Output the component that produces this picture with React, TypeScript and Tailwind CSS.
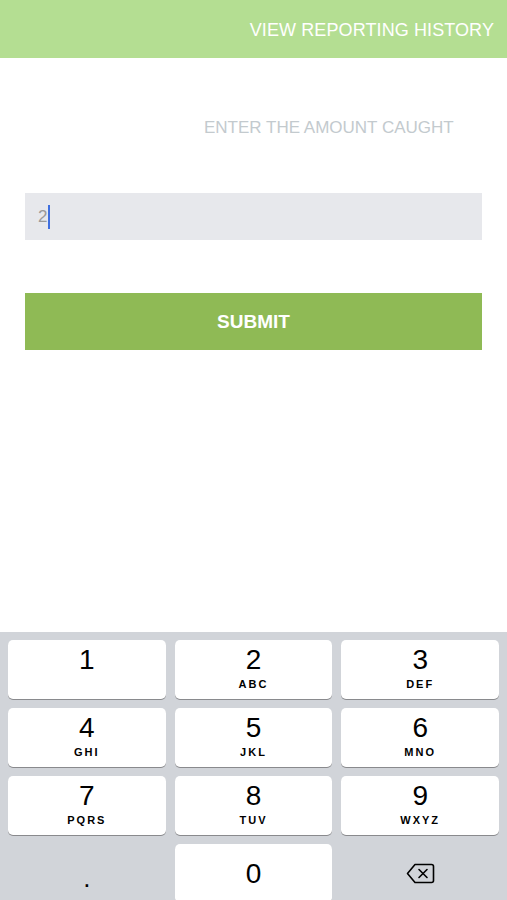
import { useState } from "react";

const keys = [
  { d: "1", l: "" },
  { d: "2", l: "ABC" },
  { d: "3", l: "DEF" },
  { d: "4", l: "GHI" },
  { d: "5", l: "JKL" },
  { d: "6", l: "MNO" },
  { d: "7", l: "PQRS" },
  { d: "8", l: "TUV" },
  { d: "9", l: "WXYZ" },
];

function Key({ d, l }: { d: string; l: string }) {
  return (
    <div className="h-[59px] rounded-[5px] bg-white shadow-[0_1px_0_#898a8d] flex flex-col items-center pt-[3px]">
      <span className="text-[28px] leading-[34px] text-black">{d}</span>
      {l && (
        <span className="text-[11px] leading-[14px] font-bold tracking-[2px] text-black">
          {l}
        </span>
      )}
    </div>
  );
}

export default function App() {
  const [amount] = useState("2");

  return (
    <div className="w-[507px] h-[900px] flex flex-col bg-white overflow-hidden font-['Liberation_Sans',Arial,sans-serif]">
      <div className="h-[58px] shrink-0 bg-[#b4de92] flex items-center justify-end pr-[13px] pt-[2px]">
        <span className="text-white text-[18px] tracking-[0.1px]">VIEW REPORTING HISTORY</span>
      </div>

      <div className="pt-[60px] pl-[204px] text-[17px] leading-[20px] text-[#c3cace]">
        ENTER THE AMOUNT CAUGHT
      </div>

      <div className="mx-[25px] mt-[55px] h-[47px] bg-[#e7e8ec] flex items-center pl-[13px]">
        <span className="text-[17px] text-[#9a9a9a]">{amount}</span>
        <span className="w-[2px] h-[24px] bg-[#3f6fe0] ml-[1px]" />
      </div>

      <button className="mx-[25px] mt-[53px] h-[57px] pt-[2px] bg-[#8fba55] text-white font-bold text-[19px]">
        SUBMIT
      </button>

      <div className="mt-auto h-[268px] bg-[#d1d4d9] px-[8px] pt-[8px] grid grid-cols-3 gap-x-[9px] gap-y-[9px] content-start">
        {keys.map((k) => (
          <Key key={k.d} d={k.d} l={k.l} />
        ))}
        <div className="h-[59px] flex items-center justify-center">
          <span className="text-[26px] text-black leading-none pt-[8px]">.</span>
        </div>
        <div className="h-[59px] rounded-[5px] bg-white shadow-[0_1px_0_#898a8d] flex items-center justify-center">
          <span className="text-[28px] leading-[34px] text-black">0</span>
        </div>
        <div className="h-[59px] flex items-center justify-center">
          <svg width="29" height="21" viewBox="0 0 29 21" fill="none" stroke="black" strokeWidth="1.6" strokeLinejoin="round" strokeLinecap="round">
            <path d="M9 1.5h16.5a2 2 0 0 1 2 2v14a2 2 0 0 1-2 2H9L1.5 10.5z" />
            <path d="M13 6.5l8 8M21 6.5l-8 8" />
          </svg>
        </div>
      </div>
    </div>
  );
}
